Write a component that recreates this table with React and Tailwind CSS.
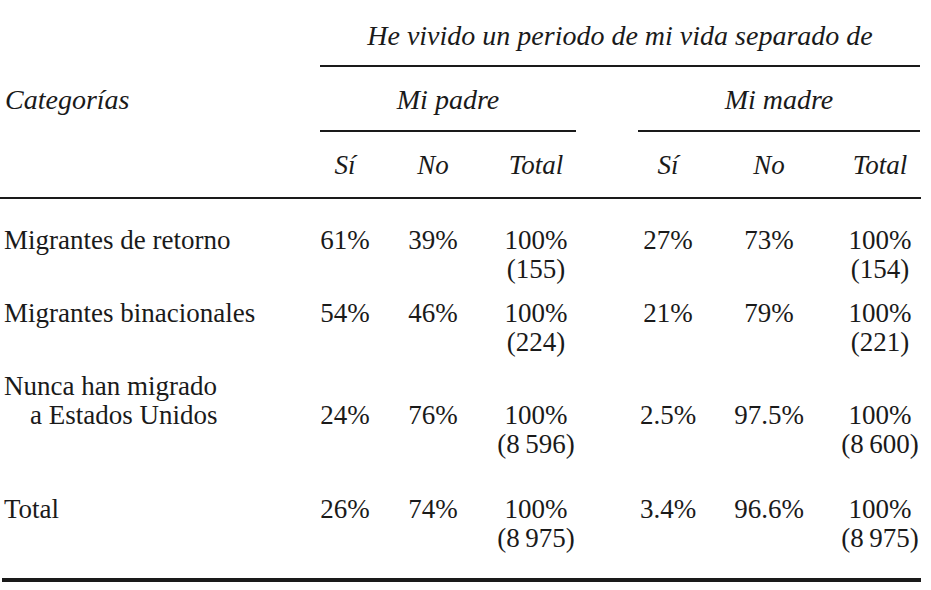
import React from "react";

const cols = "grid grid-cols-[320px_50px_126px_80px_62px_60px_142px_80px]";

const rows = [
  {
    label: ["Migrantes de retorno"],
    padre: ["61%", "39%", "100%", "(155)"],
    madre: ["27%", "73%", "100%", "(154)"],
    gap: "mt-[27px]",
  },
  {
    label: ["Migrantes binacionales"],
    padre: ["54%", "46%", "100%", "(224)"],
    madre: ["21%", "79%", "100%", "(221)"],
    gap: "mt-[15px]",
  },
  {
    label: ["Nunca han migrado", "a Estados Unidos"],
    padre: ["24%", "76%", "100%", "(8\u2009596)"],
    madre: ["2.5%", "97.5%", "100%", "(8\u2009600)"],
    gap: "mt-[15px]",
  },
  {
    label: ["Total"],
    padre: ["26%", "74%", "100%", "(8\u2009975)"],
    madre: ["3.4%", "96.6%", "100%", "(8\u2009975)"],
    gap: "mt-[36px]",
  },
];

// una celda de datos; en filas de dos renglones los datos bajan uno
const Cell = ({ children, offset }) => (
  <div className={`text-center ${offset ? "pt-[29px]" : ""}`}>{children}</div>
);

const Group = ({ vals, offset }) => (
  <>
    <Cell offset={offset}>{vals[0]}</Cell>
    <Cell offset={offset}>{vals[1]}</Cell>
    <Cell offset={offset}>
      <div>{vals[2]}</div>
      <div>{vals[3]}</div>
    </Cell>
  </>
);

export default function App() {
  return (
    <div className="min-h-[590px] w-[931px] bg-white font-['Liberation_Serif',serif] text-[27px] leading-[29px] text-[#1a1a1a]">
      {/* cabecera */}
      <div className={`${cols} pt-[21px] text-[28px]`}>
        <div />
        <div className="col-span-7 text-center italic">
          He vivido un periodo de mi vida separado de
        </div>
      </div>
      <div className={`${cols} mt-[15px]`}>
        <div />
        <div className="col-span-7 h-[2px] bg-[#1a1a1a]" />
      </div>
      <div className={`${cols} mt-[18px] text-[28px] italic`}>
        <div className="pl-[5px]">Categorías</div>
        <div className="col-span-3 text-center">Mi padre</div>
        <div />
        <div className="col-span-3 text-center">Mi madre</div>
      </div>
      <div className={`${cols} mt-[16px]`}>
        <div />
        <div className="col-span-3 h-[2px] bg-[#1a1a1a]" />
        <div />
        <div className="col-span-3 h-[2px] bg-[#1a1a1a]" />
      </div>
      <div className={`${cols} mt-[19px] italic`}>
        <div />
        <div className="text-center">Sí</div>
        <div className="text-center">No</div>
        <div className="text-center">Total</div>
        <div />
        <div className="text-center">Sí</div>
        <div className="text-center">No</div>
        <div className="text-center">Total</div>
      </div>
      <div className="mt-[17px] h-[2px] w-[921px] bg-[#1a1a1a]" />

      {/* cuerpo */}
      {rows.map((r) => {
        const offset = r.label.length > 1;
        return (
          <div key={r.label[0]} className={`${cols} ${r.gap}`}>
            <div className="pl-[4px]">
              {r.label.map((l, i) => (
                <div key={l} className={i > 0 ? "pl-[26px]" : ""}>
                  {l}
                </div>
              ))}
            </div>
            <Group vals={r.padre} offset={offset} />
            <div />
            <Group vals={r.madre} offset={offset} />
          </div>
        );
      })}

      <div className="ml-[2px] mt-[25px] h-[4px] w-[919px] bg-[#1a1a1a]" />
    </div>
  );
}
